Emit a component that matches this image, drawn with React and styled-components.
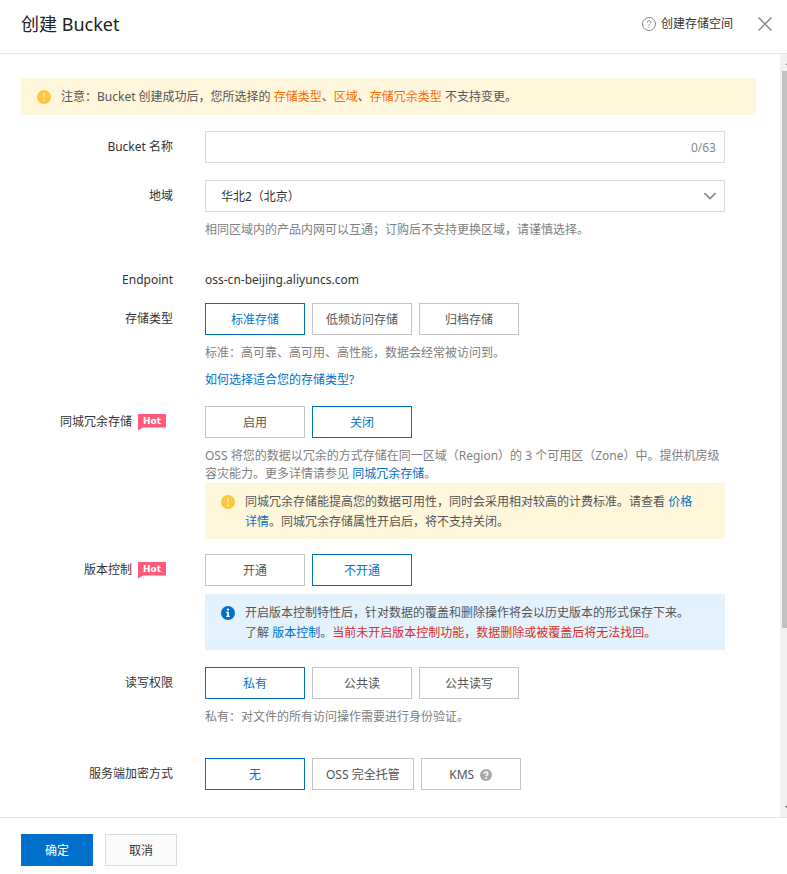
import React, { useState } from "react";
import styled, { createGlobalStyle } from "styled-components";

const GlobalStyle = createGlobalStyle`
  *, *::before, *::after { box-sizing: border-box; }
  body {
    margin: 0;
    background: #fff;
    color: #333;
    font-family: "Noto Sans", "Noto Sans CJK SC", sans-serif;
    font-size: 12px;
    line-height: 20px;
  }
  button, input, select { font: inherit; }
  h1, p { margin: 0; }
`;

const Drawer = styled.div`
  display: flex;
  flex-direction: column;
  height: 100vh;
`;

const Header = styled.header`
  display: flex;
  align-items: center;
  flex: none;
  padding: 10px 15px 15px 21px;
  border-bottom: 1px solid #e5e5e5;
`;

const Title = styled.h1`
  flex: 1;
  font-size: 18px;
  font-weight: 400;
  line-height: 28px;
  color: #222;
`;

const HelpLink = styled.a`
  display: flex;
  align-items: center;
  gap: 5px;
  color: #333;
  text-decoration: none;
`;

const CloseButton = styled.button`
  display: flex;
  margin-left: 25px;
  padding: 0;
  border: 0;
  background: none;
  color: #888;
  cursor: pointer;
`;

const Body = styled.div`
  display: flex;
  flex: 1;
  min-height: 0;
`;

const Content = styled.main`
  flex: 1;
  min-width: 0;
  padding: 24px 24px 24px 21px;
  overflow: hidden;
`;

const ScrollTrack = styled.div`
  display: flex;
  flex-direction: column;
  flex: none;
  width: 7px;
  overflow: hidden;
  background: #f1f1f1;
`;

const ScrollThumb = styled.div`
  height: 73%;
  margin-left: 2px;
  background: #c1c1c1;
`;

const ScrollArrow = styled.svg`
  flex: none;
  width: 17px;
  height: 17px;
  margin-top: ${(p) => (p.$end ? "auto" : "0")};
  fill: ${(p) => (p.$end ? "#505050" : "#a3a3a3")};
`;

const Notice = styled.div`
  display: flex;
  gap: 10px;
  padding: 9px 24px 7px 16px;
  color: #555;
  background: ${(p) => (p.$tone === "info" ? "#e3f2fd" : "#fff7db")};
  margin-top: ${(p) => p.$top || 0}px;

  svg {
    flex: none;
    margin-top: 3px;
  }
`;

const PageNotice = styled(Notice)`
  padding-bottom: 8px;
  margin-bottom: 16px;
`;

const Orange = styled.span`
  color: #ff6a00;
`;

const Red = styled.span`
  color: #d93026;
`;

const Link = styled.a`
  color: #0070cc;
  text-decoration: none;
`;

const Row = styled.div`
  display: flex;
  gap: 32px;
  margin-bottom: ${(p) => p.$after || 17}px;
`;

const labelCss = `
  display: flex;
  flex: none;
  align-items: center;
  justify-content: flex-end;
  gap: 6px;
  width: 152px;
  height: 32px;
`;

const FieldLabel = styled.label`
  ${labelCss}
`;

const GroupLabel = styled.span`
  ${labelCss}
`;

const HotTag = styled.span`
  width: 28px;
  height: 17px;
  margin-right: 7px;
  background: #ff5a7a;
  clip-path: polygon(0 0, 100% 0, 100% 14px, 5px 14px, 0 100%);
  color: #fff;
  font: bold 9px/15px "DejaVu Sans", sans-serif;
  text-align: center;
`;

const Field = styled.div`
  flex: 1;
  min-width: 0;
  max-width: 520px;
`;

const InputBox = styled.div`
  display: flex;
  align-items: center;
  height: 32px;
  padding: 2px 8px 0;
  border: 1px solid #dcdcdc;
`;

const TextInput = styled.input`
  flex: 1;
  min-width: 0;
  border: 0;
  outline: 0;
  background: none;
  color: #333;
`;

const Counter = styled.span`
  color: #888;
`;

const SelectBox = styled.div`
  display: grid;
  align-items: center;

  > * {
    grid-area: 1 / 1;
  }

  svg {
    justify-self: end;
    margin-right: 9px;
    pointer-events: none;
  }
`;

const Select = styled.select`
  width: 100%;
  height: 32px;
  padding: 2px 32px 0 15px;
  appearance: none;
  border: 1px solid #dcdcdc;
  border-radius: 0;
  background: #fff;
  color: #333;
`;

const Hint = styled.p`
  margin-top: 9px;
  line-height: 18px;
  color: #808080;
`;

const LinkLine = styled.p`
  margin-top: 8px;
`;

const PlainValue = styled.div`
  line-height: 32px;
`;

const OptionGroup = styled.div`
  display: flex;
  flex-wrap: wrap;
  gap: 7px;
`;

const Option = styled.button`
  display: flex;
  align-items: center;
  justify-content: center;
  gap: 6px;
  min-width: 100px;
  height: 32px;
  padding: 2px 13px 0;
  border: 1px solid ${(p) => (p.$active ? "#0070b8" : "#c4c4c4")};
  background: #fff;
  color: ${(p) => (p.$active ? "#0077cc" : "#555")};
  cursor: pointer;
`;

const Footer = styled.footer`
  display: flex;
  flex: none;
  gap: 12px;
  padding: 16px 21px 8px;
  border-top: 1px solid #e5e5e5;
`;

const ActionButton = styled.button`
  width: 72px;
  height: 32px;
  padding: 2px 0 0;
  border: 1px solid ${(p) => (p.$primary ? "#0070cc" : "#dcdcdc")};
  background: ${(p) => (p.$primary ? "#0070cc" : "#fafafa")};
  color: ${(p) => (p.$primary ? "#fff" : "#333")};
  cursor: pointer;
`;

const WarnIcon = () => (
  <svg width="14" height="14" viewBox="0 0 14 14" aria-hidden="true">
    <circle cx="7" cy="7" r="7" fill="#ffc440" />
    <path d="M6.2 2.8h1.6L7.5 8.3h-1z" fill="#fff3cc" />
    <circle cx="7" cy="10.3" r="0.9" fill="#fff3cc" />
  </svg>
);

const InfoIcon = () => (
  <svg width="14" height="14" viewBox="0 0 14 14" aria-hidden="true">
    <circle cx="7" cy="7" r="7" fill="#0070cc" />
    <circle cx="7" cy="3.6" r="1.2" fill="#fff" />
    <path d="M5.2 5.8h2.7v4h1v1.3H5.2V9.8h1V7.1h-1z" fill="#fff" />
  </svg>
);

const HelpIcon = () => (
  <svg width="14" height="14" viewBox="0 0 14 14" fill="none" stroke="#888" aria-hidden="true">
    <circle cx="7" cy="7" r="6.5" />
    <path d="M5.2 5.5c0-2.4 3.7-2.3 3.7-.1C8.9 6.7 7 6.8 7 8.5" />
    <path d="M7 9.5v1.2" />
  </svg>
);

const HelpSolidIcon = () => (
  <svg width="12" height="12" viewBox="0 0 12 12" aria-hidden="true">
    <circle cx="6" cy="6" r="6" fill="#a8a8a8" />
    <path d="M4.2 4.8c0-2.3 3.7-2.2 3.7-.2C7.9 5.9 6 5.9 6 7.3" fill="none" stroke="#fff" strokeWidth="1.5" />
    <circle cx="6" cy="9.2" r="0.9" fill="#fff" />
  </svg>
);

const CloseIcon = () => (
  <svg width="14" height="14" viewBox="0 0 14 14" fill="none" stroke="currentColor" strokeWidth="1.5" aria-hidden="true">
    <path d="M.5.5l13 13M13.5.5l-13 13" />
  </svg>
);

const ChevronIcon = () => (
  <svg width="12" height="8" viewBox="0 0 12 8" fill="none" stroke="#888" strokeWidth="1.6" aria-hidden="true">
    <path d="M.5 1L6 6.5 11.500 1" />
  </svg>
);

function Options({ label, items, initial }) {
  const [selected, setSelected] = useState(initial);
  return (
    <OptionGroup role="group" aria-labelledby={label}>
      {items.map((item) => (
        <Option
          key={item}
          type="button"
          $active={item === selected}
          aria-pressed={item === selected}
          onClick={() => setSelected(item)}
        >
          {item}
          {item === "KMS" && <HelpSolidIcon />}
        </Option>
      ))}
    </OptionGroup>
  );
}

export default function App() {
  const [name, setName] = useState("");
  return (
    <Drawer lang="zh-CN">
      <GlobalStyle />
      <Header>
        <Title>创建 Bucket</Title>
        <HelpLink href="#help">
          <HelpIcon />
          创建存储空间
        </HelpLink>
        <CloseButton type="button" aria-label="关闭">
          <CloseIcon />
        </CloseButton>
      </Header>

      <Body>
        <Content>
          <PageNotice>
            <WarnIcon />
            <p>
              注意：Bucket 创建成功后，您所选择的 <Orange>存储类型</Orange>、<Orange>区域</Orange>、
              <Orange>存储冗余类型</Orange> 不支持变更。
            </p>
          </PageNotice>

          <Row>
            <FieldLabel htmlFor="bucket-name">Bucket 名称</FieldLabel>
            <Field>
              <InputBox>
                <TextInput
                  id="bucket-name"
                  maxLength={63}
                  value={name}
                  onChange={(e) => setName(e.target.value)}
                />
                <Counter>{name.length}/63</Counter>
              </InputBox>
            </Field>
          </Row>

          <Row $after={25}>
            <FieldLabel htmlFor="region">地域</FieldLabel>
            <Field>
              <SelectBox>
                <Select id="region">
                  <option>华北2（北京）</option>
                </Select>
                <ChevronIcon />
              </SelectBox>
              <Hint>相同区域内的产品内网可以互通；订购后不支持更换区域，请谨慎选择。</Hint>
            </Field>
          </Row>

          <Row $after={7}>
            <GroupLabel>Endpoint</GroupLabel>
            <Field>
              <PlainValue>oss-cn-beijing.aliyuncs.com</PlainValue>
            </Field>
          </Row>

          <Row $after={16}>
            <GroupLabel id="storage">存储类型</GroupLabel>
            <Field>
              <Options label="storage" items={["标准存储", "低频访问存储", "归档存储"]} initial="标准存储" />
              <Hint>标准：高可靠、高可用、高性能，数据会经常被访问到。</Hint>
              <LinkLine>
                <Link href="#storage-types">如何选择适合您的存储类型?</Link>
              </LinkLine>
            </Field>
          </Row>

          <Row $after={15}>
            <GroupLabel id="redundancy">
              同城冗余存储<HotTag>Hot</HotTag>
            </GroupLabel>
            <Field>
              <Options label="redundancy" items={["启用", "关闭"]} initial="关闭" />
              <Hint>
                OSS 将您的数据以冗余的方式存储在同一区域（Region）的 3 个可用区（Zone）中。提供机房级容灾能力。更多详情请参见{" "}
                <Link href="#redundancy-docs">同城冗余存储</Link>。
              </Hint>
              <Notice>
                <WarnIcon />
                <p>
                  同城冗余存储能提高您的数据可用性，同时会采用相对较高的计费标准。请查看{" "}
                  <Link href="#pricing">价格详情</Link>。同城冗余存储属性开启后，将不支持关闭。
                </p>
              </Notice>
            </Field>
          </Row>

          <Row>
            <GroupLabel id="versioning">
              版本控制<HotTag>Hot</HotTag>
            </GroupLabel>
            <Field>
              <Options label="versioning" items={["开通", "不开通"]} initial="不开通" />
              <Notice $tone="info" $top={8}>
                <InfoIcon />
                <p>
                  开启版本控制特性后，针对数据的覆盖和删除操作将会以历史版本的形式保存下来。
                  <br />
                  了解 <Link href="#versioning-docs">版本控制</Link>。
                  <Red>当前未开启版本控制功能，数据删除或被覆盖后将无法找回。</Red>
                </p>
              </Notice>
            </Field>
          </Row>

          <Row $after={32}>
            <GroupLabel id="acl">读写权限</GroupLabel>
            <Field>
              <Options label="acl" items={["私有", "公共读", "公共读写"]} initial="私有" />
              <Hint>私有：对文件的所有访问操作需要进行身份验证。</Hint>
            </Field>
          </Row>

          <Row>
            <GroupLabel id="encryption">服务端加密方式</GroupLabel>
            <Field>
              <Options label="encryption" items={["无", "OSS 完全托管", "KMS"]} initial="无" />
            </Field>
          </Row>
        </Content>

        <ScrollTrack aria-hidden="true">
          <ScrollArrow viewBox="0 0 17 17">
            <path d="M5 11l4-4 4 4z" />
          </ScrollArrow>
          <ScrollThumb />
          <ScrollArrow $end viewBox="0 0 17 17">
            <path d="M5 6h8l-4 4z" />
          </ScrollArrow>
        </ScrollTrack>
      </Body>

      <Footer>
        <ActionButton type="button" $primary>确定</ActionButton>
        <ActionButton type="button">取消</ActionButton>
      </Footer>
    </Drawer>
  );
}
